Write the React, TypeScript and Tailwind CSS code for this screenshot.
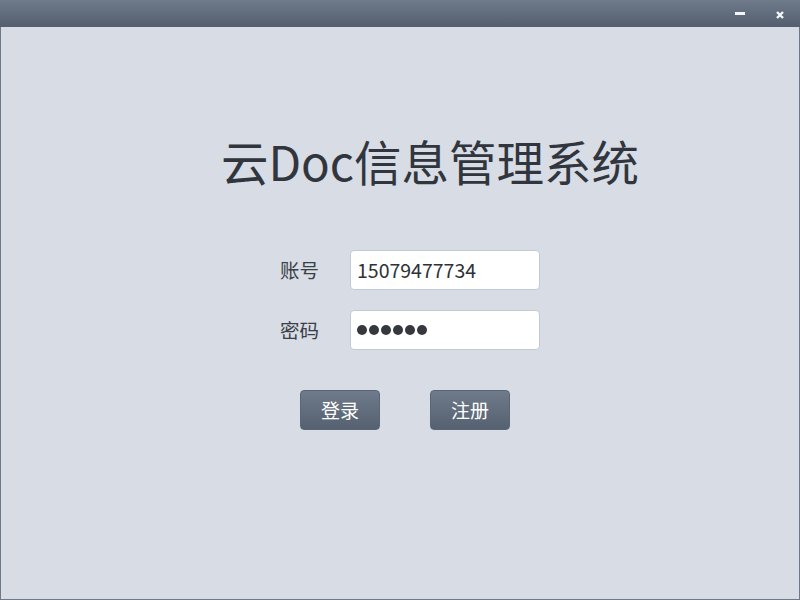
import React from "react";

export default function App() {
  const font = { fontFamily: '"Noto Sans CJK SC", "Open Sans", sans-serif' };
  return (
    <div className="w-[800px] h-[600px] flex flex-col bg-[#d8dce4] border border-[#6e7a8a] border-t-0" style={font}>
      <div className="h-[27px] shrink-0 -mx-px bg-gradient-to-b from-[#6f7b8b] to-[#535e6e] flex items-start justify-end">
        <div className="w-[10px] h-[3px] bg-[#f4f6fa] mt-[12px] mr-[30px]" />
        <svg width="10" height="10" viewBox="0 0 10 10" className="mt-[10px] mr-[15px]">
          <path d="M2 2 L8 8 M8 2 L2 8" stroke="#f4f6fa" strokeWidth="2.4" />
        </svg>
      </div>
      <div className="flex flex-col items-center">
        <div className="mt-[104px] h-[60px] ml-[60px] flex items-center text-[47.5px] text-[#31363e] leading-none">
          云Doc信息管理系统
        </div>
        <div className="mt-[59px] flex flex-col gap-[20px] ml-[20px]">
          <div className="flex items-center">
            <span className="w-[70px] text-[19.5px] text-[#3a3f47]">账号</span>
            <div className="w-[190px] h-[40px] bg-white rounded-[4px] border border-[#c2cad8] flex items-center px-[6px] text-[19.5px] text-[#2e3238]">
              15079477734
            </div>
          </div>
          <div className="flex items-center">
            <span className="w-[70px] text-[19.5px] text-[#3a3f47]">密码</span>
            <div className="w-[190px] h-[40px] bg-white rounded-[4px] border border-[#c2cad8] flex items-center px-[6px] gap-[2px]">
              {[0, 1, 2, 3, 4, 5].map((i) => (
                <span key={i} className="w-[10px] h-[10px] rounded-full bg-[#35383d]" />
              ))}
            </div>
          </div>
        </div>
        <div className="mt-[40px] flex gap-[50px] ml-[10px]">
          <button className="w-[80px] h-[40px] rounded-[4px] bg-gradient-to-b from-[#6f7b8b] to-[#556070] border border-[#5a6575] text-white text-[19px]">
            登录
          </button>
          <button className="w-[80px] h-[40px] rounded-[4px] bg-gradient-to-b from-[#6f7b8b] to-[#556070] border border-[#5a6575] text-white text-[19px]">
            注册
          </button>
        </div>
      </div>
    </div>
  );
}
